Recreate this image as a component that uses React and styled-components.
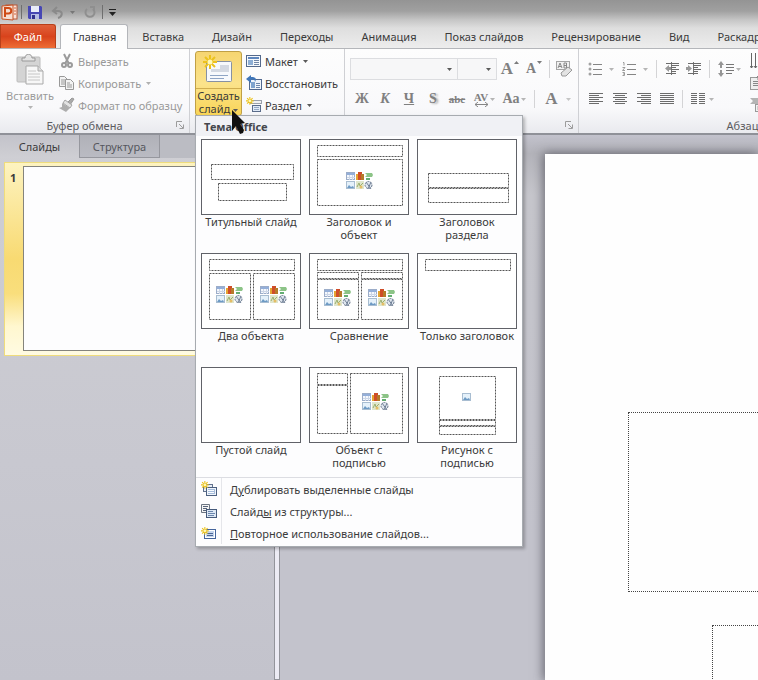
import React from "react";
import styled, { createGlobalStyle, css } from "styled-components";

const GlobalStyle = createGlobalStyle`
  * {
    box-sizing: border-box;
  }

  body {
    margin: 0;
    font-family: "Noto Sans", "Open Sans", sans-serif;
    font-size: 11px;
    line-height: 13px;
    color: #3b3b3b;
  }

  button, select {
    font: inherit;
    color: inherit;
    margin: 0;
    padding: 0;
    border: 0;
    background: none;
  }

  svg {
    display: block;
    flex: none;
  }
`;

const tabs = [
  "Вставка",
  "Дизайн",
  "Переходы",
  "Анимация",
  "Показ слайдов",
  "Рецензирование",
  "Вид",
  "Раскадровка",
];

// Placeholder frames are [x, y, width, height], icon groups are [x, y]
const layouts = [
  {
    name: "Титульный слайд",
    frames: [[10, 25, 82, 15], [17, 44, 68, 17]],
  },
  {
    name: "Заголовок и объект",
    frames: [[8, 6, 85, 11], [8, 20, 85, 46]],
    content: [[37, 33]],
  },
  {
    name: "Заголовок раздела",
    frames: [[11, 34, 80, 14], [11, 49, 80, 14]],
  },
  {
    name: "Два объекта",
    frames: [[8, 6, 85, 11], [8, 20, 41, 46], [52, 20, 41, 46]],
    content: [[15, 33], [59, 33]],
  },
  {
    name: "Сравнение",
    frames: [
      [8, 6, 85, 11],
      [8, 19, 41, 6],
      [52, 19, 41, 6],
      [8, 26, 41, 40],
      [52, 26, 41, 40],
    ],
    content: [[15, 36], [59, 36]],
  },
  {
    name: "Только заголовок",
    frames: [[8, 6, 85, 11]],
  },
  { name: "Пустой слайд", frames: [] },
  {
    name: "Объект с подписью",
    frames: [[8, 6, 30, 11], [8, 18, 30, 48], [41, 6, 52, 60]],
    content: [[53, 26]],
  },
  {
    name: "Рисунок с подписью",
    frames: [[22, 9, 56, 43], [22, 53, 56, 5], [22, 59, 56, 8]],
    picture: [45, 26],
  },
];

/* Icons */

const Arrow = ({ color = "#5a5a5a" }) => (
  <svg width="5" height="3" viewBox="0 0 5 3" aria-hidden="true">
    <path d="M0 0h5L2.5 3z" fill={color} />
  </svg>
);

const RaisedArrow = ({ up }) => (
  <svg width="5" height="3" viewBox="0 0 5 3" aria-hidden="true">
    <path d={up ? "M0 3h5L2.5 0z" : "M0 0h5L2.5 3z"} fill="#7c7c7c" />
  </svg>
);

const Star = () => (
  <g stroke="#ecc21c" strokeWidth="2">
    <path d="M7 0v14M0 7h14M2 2l10 10M12 2L2 12" />
    <circle cx="7" cy="7" r="2.500" fill="#fff8b8" stroke="none" />
  </g>
);

const LogoIcon = () => (
  <svg width="17" height="17" viewBox="0 0 17 17">
    <rect x="5" y="1" width="11" height="14" fill="#f9e2d8" stroke="#b75736" />
    <path d="M1 2l11-1v15L1 15z" fill="#f6ded2" stroke="#c75427" />
    <path d="M4 13V4h3.500a2.500 2.500 0 0 1 0 5.500H4" fill="none" stroke="#cf4b16" strokeWidth="2" />
    <path d="M13 4h2M13 7h2M13 10h2" stroke="#d86b40" />
  </svg>
);

const SaveIcon = () => (
  <svg width="14" height="14" viewBox="0 0 14 14">
    <path d="M0 1h13l1 1v12H1l-1-1z" fill="#4747b4" />
    <path d="M3 1h8v6H3z" fill="#e9edfa" />
    <path d="M3 9h8v5H3z" fill="#b6bde4" />
    <path d="M4 10h3v4H4z" fill="#30308c" />
  </svg>
);

const UndoIcon = () => (
  <svg width="13" height="14" viewBox="0 0 13 14" fill="none" stroke="#8a8a8a" strokeWidth="2">
    <path d="M2 6h5c6 0 4 6 0 7M6 2L2 6l4 3" />
  </svg>
);

const RedoIcon = () => (
  <svg width="12" height="13" viewBox="0 0 12 13" fill="none" stroke="#8f8f8f" strokeWidth="2">
    <path d="M3 3a4.500 4.500 0 1 0 6 0M6 1h4v4" />
  </svg>
);

const CustomizeIcon = () => (
  <svg width="7" height="7" viewBox="0 0 7 7">
    <path d="M0 0h7v1H0zM0 3h7L3.500 7z" fill="#222" />
  </svg>
);

const PasteIcon = () => (
  <svg width="28" height="31" viewBox="0 0 28 31">
    <rect x="1" y="3" width="23" height="25" rx="1" fill="#d4d4d4" stroke="#bcbcbc" />
    <path d="M6 7V4h3c0-5 7-5 7 0h3v3z" fill="#e4e4e4" stroke="#999" />
    <path d="M10 12h12l5 5v13H10z" fill="#f7f7f7" stroke="#a9a9a9" />
    <path d="M22 12v5h5" fill="#ddd" stroke="#a9a9a9" />
    <path d="M12 17h8M12 20h12M12 23h12M12 26h12" stroke="#c6c6c6" />
  </svg>
);

const CutIcon = () => (
  <svg width="16" height="16" viewBox="0 0 16 16" fill="none" stroke="#9b9b9b" strokeWidth="2">
    <path d="M5 1l5 10M11 1L6 11" />
    <circle cx="5" cy="12" r="2" />
    <circle cx="11" cy="12" r="2" />
  </svg>
);

const CopyIcon = () => (
  <svg width="16" height="16" viewBox="0 0 16 16" fill="#f3f3f3" stroke="#999">
    <path d="M.5 1.500h5l3 3v7h-8z" />
    <path d="M2 5h4M2 7h5M2 9h5" />
    <path d="M6.500 4.500h5l3 3v7h-8z" />
    <path d="M8 8h3M8 10h5M8 12h5" />
  </svg>
);

const BrushIcon = () => (
  <svg width="16" height="16" viewBox="0 0 16 16">
    <path d="M13 1l2 1-4 6-3-2z" fill="#aaa" stroke="#999" />
    <path d="M6 3l7 5-2 3-7-5z" fill="#e3e3e3" stroke="#a5a5a5" />
    <path d="M3 6l8 5-4 4-7-4 3-1z" fill="#adadad" />
  </svg>
);

const NewSlideIcon = () => (
  <svg width="32" height="30" viewBox="0 0 32 30">
    <rect x="3.500" y="6.500" width="25" height="20" rx="1" fill="#f7f9fc" stroke="#8791a3" />
    <path d="M17 10h9v7H8v-3h9z" fill="#d4d9e2" />
    <path d="M7 20.500h18M7 23.500h14" stroke="#8fa5c5" />
    <Star />
  </svg>
);

const LayoutIcon = () => (
  <svg width="16" height="16" viewBox="0 0 16 16">
    <rect x=".5" y="2.500" width="14" height="11" fill="#f5f8fc" stroke="#54698c" />
    <path d="M2 4h11v2H2z" fill="#5e86bd" />
    <path d="M2 7h5v5H2z" fill="#8daed5" />
    <path d="M8 7.500h5M8 9.500h5M8 11.500h5" stroke="#7086a7" />
  </svg>
);

const ResetIcon = () => (
  <svg width="16" height="16" viewBox="0 0 16 16">
    <rect x="3.500" y="4.500" width="12" height="10" fill="#f0f5fb" stroke="#51688f" />
    <path d="M5 7h4v6H5z" fill="#7fa4cf" />
    <path d="M10 8.500h4M10 10.500h4M10 12.500h4" stroke="#6e87ad" />
    <path d="M5 0L0 4l5 4V5c3-1 4 0 4 2 2-4 0-5-4-5z" fill="#3f76b9" />
  </svg>
);

const SectionIcon = () => (
  <svg width="16" height="16" viewBox="0 0 16 16">
    <rect x="4.500" y="3.500" width="11" height="3" fill="#f2f2f2" stroke="#9aa0aa" />
    <rect x="6.500" y="8.500" width="8" height="6" fill="#dfe9f6" stroke="#5a6c8a" />
    <path d="M8 10.500h5M8 12.500h5" stroke="#94a8c5" />
    <g transform="scale(.55)">
      <Star />
    </g>
  </svg>
);

const DuplicateIcon = () => (
  <svg width="16" height="16" viewBox="0 0 16 16">
    <rect x="2.500" y="3.500" width="9" height="7" fill="#e8eef6" stroke="#62738f" />
    <rect x="5.500" y="6.500" width="10" height="8" fill="#eff4fb" stroke="#4c607f" />
    <path d="M7 8h7v5H7z" fill="#a5bcdb" />
    <path d="M7 9.500h6M7 11.500h6" stroke="#f8fbff" />
    <g transform="scale(.55)">
      <Star />
    </g>
  </svg>
);

const OutlineIcon = () => (
  <svg width="16" height="16" viewBox="0 0 16 16">
    <path d="M.5 1.500h8v8h-8z" fill="#f4f4f4" stroke="#6c7582" />
    <path d="M2 3.500h5M2 5.500h4M2 7.500h3" stroke="#59657a" />
    <rect x="5.500" y="6.500" width="10" height="8" fill="#dce7f4" stroke="#465a7b" />
    <path d="M7 8.500h5M7 10.500h7M7 12.500h6" stroke="#6b87ae" />
  </svg>
);

const ReuseIcon = () => (
  <svg width="16" height="16" viewBox="0 0 16 16">
    <rect x="3.500" y="4.500" width="11" height="9" fill="#fff" stroke="#45659c" />
    <path d="M5 6h8v6H5z" fill="#c4d5ed" />
    <path d="M6 8.500h6M6 10.500h6" stroke="#4c6797" />
    <g transform="translate(0 2) scale(.55)">
      <Star />
    </g>
  </svg>
);

const LauncherIcon = () => (
  <svg width="8" height="8" viewBox="0 0 8 8" fill="none" stroke="#9c9c9c">
    <path d="M.5 6V.5H6M3 3l4 4M7.500 3.500v4h-4" />
  </svg>
);

const SpacingIcon = () => (
  <svg width="15" height="5" viewBox="0 0 15 5" fill="none" stroke="#858585">
    <path d="M1 2.500h13M4 0L1 2.500 4 5M11 0l3 2.500L11 5" />
  </svg>
);

const EraserIcon = () => (
  <svg width="17" height="18" viewBox="0 0 17 18">
    <rect x=".5" y="1.500" width="13" height="8" fill="#f1f1f1" stroke="#a5a5a5" />
    <path d="M2 8l2-5 2 5M3 6.500h2M8 3v5h2.500V3H8M8 5.500h3" fill="none" stroke="#888" />
    <path d="M12 7l4 3-6 6H6l-1-3z" fill="#e3e3e3" stroke="#999" />
  </svg>
);

const BulletsIcon = () => (
  <svg width="16" height="14" viewBox="0 0 16 14">
    <g fill="#a2a2a2">
      <circle cx="2" cy="2" r="1.500" />
      <circle cx="2" cy="7" r="1.500" />
      <circle cx="2" cy="12" r="1.500" />
    </g>
    <path d="M5 2.500h9M5 7.500h9M5 12.500h9" stroke="#858585" />
  </svg>
);

const NumbersIcon = () => (
  <svg width="16" height="14" viewBox="0 0 16 14" fill="none" stroke="#9a9a9a">
    <path d="M1 .5h1v3M.5 5.500H3L.5 8.500H3M.5 10.500h2v3h-2M1 12h1" />
    <path d="M5 2.500h9M5 7.500h9M5 12.500h9" stroke="#858585" />
  </svg>
);

const IndentIcon = ({ back }) => (
  <svg width="16" height="14" viewBox="0 0 16 14">
    <path d="M2 1.500h13M7 3.500h8M7 5.500h5M7 7.500h8M7 9.500h5M2 11.500h10" stroke="#6c6c6c" />
    <path d="M7.500 0v14" stroke="#777" strokeDasharray="1 1" />
    <path d={back ? "M5 3L1 6.500 5 10V8h2V5H5z" : "M2 3l4 3.500L2 10V8H0V5h2z"} fill="#999" />
  </svg>
);

const LineSpacingIcon = () => (
  <svg width="16" height="16" viewBox="0 0 16 16">
    <path d="M3 0l3 4H4v3H2V4H0zM2 9h2v3h2l-3 4-3-4h2z" fill="#969696" />
    <path d="M8 3.500h8M8 6.500h8M8 9.500h8M8 12.500h6" stroke="#777" />
  </svg>
);

const AlignIcon = ({ d }) => (
  <svg width="14" height="12" viewBox="0 0 14 12" fill="none" stroke="#6c6c6c">
    <path d={d} />
  </svg>
);

const TextDirectionIcon = () => (
  <svg width="16" height="16" viewBox="0 0 16 16" fill="none" stroke="#666">
    <path d="M1.500 0v15M5.500 0v15M9.500 0v8M0 13l1.500 2L3 13M4 13l1.500 2L7 13" />
  </svg>
);

const TextAlignIcon = () => (
  <svg width="16" height="16" viewBox="0 0 16 16">
    <rect x=".5" y="2.500" width="12" height="12" fill="#eee" stroke="#999" />
    <path d="M3 6.500h7M3 8.500h7M3 10.500h7M8 1v4M6 3l2-2 2 2" stroke="#888" fill="none" />
  </svg>
);

const SmartArtIcon = () => (
  <svg width="16" height="16" viewBox="0 0 16 16">
    <path d="M0 1h14v6H0l3-3z" fill="#b4b4b4" />
    <rect x="5.500" y="7.500" width="9" height="7" fill="#f1f1f1" stroke="#999" />
    <path d="M7 10h6M7 12h6" stroke="#aaa" />
  </svg>
);

const Cursor = () => (
  <svg width="15" height="25" viewBox="0 0 15 25">
    <path d="M0 0l13 13-5 1 4 6-1 3-3 1-4-8-4 5z" fill="#101010" />
  </svg>
);

const Picture = ({ x, y }) => (
  <g transform={`translate(${x} ${y})`}>
    <rect x=".5" y=".5" width="8" height="7" fill="#e5f1fa" stroke="#a8bdd1" />
    <path d="M1 7l2-3 2 2 2-1 1 2z" fill="#6d9ac4" />
  </g>
);

const ContentIcons = ({ x, y }) => (
  <g transform={`translate(${x} ${y})`}>
    <rect x=".5" y=".5" width="8" height="7" fill="#f5f8fd" stroke="#9cadc9" />
    <path d="M1 1h8v2H1z" fill="#94afd9" />
    <path d="M1 5.500h8M3.500 3v5M6.500 3v5" stroke="#ccd6e6" />
    <path d="M10 2h3v6h-3z" fill="#e5a432" />
    <path d="M12 0h4v8h-4z" fill="#cf4d29" />
    <path d="M15 2h3v6h-3z" fill="#b57a29" />
    <path d="M19 1h7l1 2-1 2h-7l2-2z" fill="#8cc487" />
    <path d="M20 6h4v2h-4z" fill="#63ad72" />
    <Picture x={0} y={9} />
    <rect x="10" y="9" width="8" height="8" fill="#dfe6cc" />
    <path d="M11 15l2-4 1 3 3-3" stroke="#9baf6e" fill="none" />
    <circle cx="15" cy="15" r="1.500" fill="#e5bd65" />
    <circle cx="22.500" cy="13" r="3.500" fill="#dfe6ee" stroke="#69788c" strokeDasharray="2 1" />
    <path d="M20 10l5 7M25 10l-3 7" stroke="#718197" />
  </g>
);

const LayoutPreview = ({ layout }) => (
  <svg width="98" height="74" viewBox="1 1 98 74" aria-hidden="true">
    {layout.frames.map(([x, y, w, h]) => (
      <rect
        key={`${x}-${y}`}
        x={x + 0.5}
        y={y + 0.5}
        width={w}
        height={h}
        fill="none"
        stroke="#555"
        strokeDasharray="2 1"
      />
    ))}
    {layout.content?.map(([x, y]) => <ContentIcons key={x} x={x} y={y} />)}
    {layout.picture && <Picture x={layout.picture[0]} y={layout.picture[1]} />}
  </svg>
);

const lines = {
  left: "M0 .5h14M0 2.500h10M0 4.500h14M0 6.500h10M0 8.500h14M0 10.500h10",
  center: "M0 .5h14M2 2.500h10M0 4.500h14M2 6.500h10M0 8.500h14M2 10.500h10",
  right: "M0 .5h14M4 2.500h10M0 4.500h14M4 6.500h10M0 8.500h14M4 10.500h10",
  justify: "M0 .5h14M0 2.500h14M0 4.500h14M0 6.500h14M0 8.500h14M0 10.500h14",
  columns: "M0 .5h6M8 .5h6M0 2.500h6M8 2.500h6M0 4.500h6M8 4.500h6M0 6.500h6M8 6.500h6M0 8.500h6M8 8.500h6M0 10.500h6M8 10.500h6",
};

export default function App() {
  return (
    <Window>
      <GlobalStyle />
      <Header>
        <QuickAccess>
          <LogoIcon />
          <QuickDivider />
          <QuickButton aria-label="Сохранить"><SaveIcon /></QuickButton>
          <QuickButton aria-label="Отменить">
            <UndoIcon />
            <Arrow color="#777" />
          </QuickButton>
          <QuickButton aria-label="Повторить"><RedoIcon /></QuickButton>
          <QuickDivider />
          <QuickButton aria-label="Настройка панели"><CustomizeIcon /></QuickButton>
        </QuickAccess>
        <Tabs>
          <FileTab>Файл</FileTab>
          <Tab $active>Главная</Tab>
          {tabs.map((tab) => (
            <Tab key={tab}>{tab}</Tab>
          ))}
        </Tabs>
      </Header>

      <Ribbon>
        <Group $width={190}>
          <GroupBody>
            <PasteButton disabled>
              <PasteIcon />
              Вставить
              <Arrow color="#b5b5b5" />
            </PasteButton>
            <Commands>
              <Command disabled><CutIcon />Вырезать</Command>
              <Command disabled><CopyIcon />Копировать<Arrow color="#b0b0b0" /></Command>
              <Command disabled><BrushIcon />Формат по образцу</Command>
            </Commands>
          </GroupBody>
          <GroupFooter>
            <GroupTitle>Буфер обмена</GroupTitle>
            <Launcher aria-label="Буфер обмена: параметры"><LauncherIcon /></Launcher>
          </GroupFooter>
        </Group>

        <Group $width={155}>
          <GroupBody>
            <NewSlide>
              <NewSlideTop aria-label="Создать слайд"><NewSlideIcon /></NewSlideTop>
              <NewSlideBottom aria-expanded="true">
                Создать слайд<Arrow />
              </NewSlideBottom>
              <CursorLayer><Cursor /></CursorLayer>
              <Menu>
                <MenuTitle>Тема Office</MenuTitle>
                <Gallery>
                  {layouts.map((layout) => (
                    <LayoutButton key={layout.name}>
                      <Thumb><LayoutPreview layout={layout} /></Thumb>
                      <LayoutName>{layout.name}</LayoutName>
                    </LayoutButton>
                  ))}
                </Gallery>
                <MenuList>
                  <MenuItem>
                    <MenuIcon><DuplicateIcon /></MenuIcon>
                    <span>Д<u>у</u>блировать выделенные слайды</span>
                  </MenuItem>
                  <MenuItem>
                    <MenuIcon><OutlineIcon /></MenuIcon>
                    <span>Слайд<u>ы</u> из структуры...</span>
                  </MenuItem>
                  <MenuItem>
                    <MenuIcon><ReuseIcon /></MenuIcon>
                    <span><u>П</u>овторное использование слайдов...</span>
                  </MenuItem>
                </MenuList>
              </Menu>
            </NewSlide>
            <Commands>
              <Command><LayoutIcon />Макет<Arrow /></Command>
              <Command><ResetIcon />Восстановить</Command>
              <Command><SectionIcon />Раздел<Arrow /></Command>
            </Commands>
          </GroupBody>
        </Group>

        <Group $width={234}>
          <ToolRow>
            <Combo $width={108}>
              <select aria-label="Шрифт" />
              <Arrow />
            </Combo>
            <Combo $width={40}>
              <select aria-label="Размер шрифта" />
              <Arrow />
            </Combo>
            <Tool $width={26} $size={17} $bold aria-label="Увеличить размер">
              A<Raised><RaisedArrow up /></Raised>
            </Tool>
            <Tool $width={22} $size={14} $bold aria-label="Уменьшить размер">
              A<Raised><RaisedArrow /></Raised>
            </Tool>
            <Divider />
            <Tool $width={20} aria-label="Очистить формат"><EraserIcon /></Tool>
          </ToolRow>
          <ToolRow>
            <Tool $width={24} $bold>Ж</Tool>
            <Tool $width={22} $bold $italic>К</Tool>
            <Tool $width={26} $bold><u>Ч</u></Tool>
            <Tool $width={22} $bold $shadow>S</Tool>
            <Tool $width={26} $size={11} $bold><s>abc</s></Tool>
            <Tool $width={28} $size={11} $bold aria-label="Межзнаковый интервал">
              <Stack>AV<SpacingIcon /></Stack>
              <Arrow color="#b5b5b5" />
            </Tool>
            <Tool $width={32} $size={14} $bold>Aa<Arrow color="#b5b5b5" /></Tool>
            <Divider />
            <Tool $width={38} $size={17} $bold $gap={8}>A<Arrow color="#c5c5c5" /></Tool>
          </ToolRow>
          <GroupFooter>
            <GroupTitle />
            <Launcher aria-label="Шрифт: параметры"><LauncherIcon /></Launcher>
          </GroupFooter>
        </Group>

        <Group $width={348}>
          <Paragraph>
            <div>
              <ToolRow>
                <Tool $width={34} $gap={5} aria-label="Маркеры"><BulletsIcon /><Arrow color="#b5b5b5" /></Tool>
                <Tool $width={34} $gap={5} aria-label="Нумерация"><NumbersIcon /><Arrow color="#b5b5b5" /></Tool>
                <Divider />
                <Tool $width={22} aria-label="Уменьшить отступ"><IndentIcon back /></Tool>
                <Tool $width={22} aria-label="Увеличить отступ"><IndentIcon /></Tool>
                <Divider />
                <Tool $width={30} $gap={2} aria-label="Междустрочный интервал"><LineSpacingIcon /><Arrow color="#b5b5b5" /></Tool>
              </ToolRow>
              <ToolRow>
                <Tool $width={24} aria-label="По левому краю"><AlignIcon d={lines.left} /></Tool>
                <Tool $width={24} aria-label="По центру"><AlignIcon d={lines.center} /></Tool>
                <Tool $width={24} aria-label="По правому краю"><AlignIcon d={lines.right} /></Tool>
                <Tool $width={22} aria-label="По ширине"><AlignIcon d={lines.justify} /></Tool>
                <Divider />
                <Tool $width={30} $gap={4} aria-label="Колонки"><AlignIcon d={lines.columns} /><Arrow color="#b5b5b5" /></Tool>
              </ToolRow>
            </div>
            <Commands>
              <Command disabled aria-label="Направление текста"><TextDirectionIcon /></Command>
              <Command disabled aria-label="Выровнять текст"><TextAlignIcon /></Command>
              <Command disabled aria-label="Преобразовать в SmartArt"><SmartArtIcon /></Command>
            </Commands>
          </Paragraph>
          <GroupFooter>
            <GroupTitle>Абзац</GroupTitle>
          </GroupFooter>
        </Group>
      </Ribbon>

      <Workspace>
        <SidePane>
          <PaneTabs>
            <PaneTab $active>Слайды</PaneTab>
            <PaneTab>Структура</PaneTab>
          </PaneTabs>
          <SlideItem>
            <SlideNumber>1</SlideNumber>
            <SlideThumb />
          </SlideItem>
        </SidePane>
        <Splitter />
        <Canvas>
          <Slide>
            <TitlePlaceholder />
            <SubtitlePlaceholder />
          </Slide>
        </Canvas>
      </Workspace>
    </Window>
  );
}

/* Window and header */

const Window = styled.div`
  display: flex;
  flex-direction: column;
  height: 100vh;
  overflow: hidden;
  background: #c3c3cc;
`;

const Header = styled.header`
  border-bottom: 1px solid #b4b6ba;
  background: linear-gradient(#949494, #a0a0a0 11px, #c6c6c6 20px, #dedede 28px, #ededed);
`;

const QuickAccess = styled.div`
  display: flex;
  align-items: center;
  gap: 3px;
  height: 24px;
  padding-left: 1px;
`;

const QuickButton = styled.button`
  display: flex;
  align-items: center;
  gap: 6px;
  padding: 0 3px;
`;

const QuickDivider = styled.span`
  width: 1px;
  height: 14px;
  background: #6f6f6f;
`;

const Tabs = styled.nav`
  display: flex;
  height: 24px;
`;

const Tab = styled.button`
  flex: none;
  padding: 1px 14px 0;
  line-height: 22px;
  ${({ $active }) =>
    $active &&
    css`
      margin-bottom: -1px;
      border: 1px solid #b4b6ba;
      border-bottom: 0;
      border-radius: 3px 3px 0 0;
      padding: 0 11px 0 12px;
      background: #fdfdfd;
    `}
`;

const FileTab = styled.button`
  flex: none;
  width: 56px;
  margin-right: 4px;
  border: 1px solid #b8401a;
  border-bottom: 0;
  border-radius: 0 3px 0 0;
  color: #fff;
  line-height: 22px;
  background: linear-gradient(#e0603a, #d8431c 50%, #ee6d35);
`;

/* Ribbon */

const Ribbon = styled.div`
  display: flex;
  flex: none;
  height: 86px;
  border-bottom: 2px solid #8f9198;
  background: linear-gradient(#fdfdfd, #f9f9fb 70%, #e9eaee);
`;

const Group = styled.section`
  display: flex;
  flex: none;
  flex-direction: column;
  width: ${({ $width }) => $width}px;
  padding: 2px 5px 0;
  border-right: 1px solid #cfd0d4;
`;

const GroupBody = styled.div`
  display: flex;
  gap: 4px;
`;

const GroupFooter = styled.footer`
  display: flex;
  align-items: center;
  height: 16px;
  margin-top: auto;
`;

const GroupTitle = styled.span`
  flex: 1;
  padding-right: 20px;
  text-align: center;
  color: #5c5c60;
`;

const Launcher = styled.button`
  margin-left: -8px;
`;

const PasteButton = styled.button`
  display: flex;
  flex-direction: column;
  align-items: center;
  gap: 4px;
  width: 50px;
  padding-top: 3px;
  color: #9a9a9a;
`;

const Commands = styled.div`
  display: flex;
  flex-direction: column;
`;

const Command = styled.button`
  display: flex;
  align-items: center;
  gap: 3px;
  height: 22px;
  padding-bottom: 2px;
  white-space: nowrap;
  color: ${({ disabled }) => (disabled ? "#999" : "#3b3b3b")};

  svg:last-child:not(:first-child) {
    margin-left: 2px;
  }
`;

const NewSlide = styled.div`
  position: relative;
  display: flex;
  flex-direction: column;
  width: 47px;
  height: 65px;
  border: 1px solid #c0a046;
  border-radius: 3px;
  background: linear-gradient(#f6d571, #fbe38b 50%, #f9d557);
`;

const NewSlideTop = styled.button`
  display: flex;
  justify-content: center;
  align-items: center;
  height: 37px;
  border-bottom: 1px solid #d0ae50;
`;

const NewSlideBottom = styled.button`
  flex: 1;
  line-height: 13px;

  svg {
    display: inline-block;
    margin-left: 3px;
    vertical-align: middle;
  }
`;

const CursorLayer = styled.span`
  position: absolute;
  z-index: 2;
  top: 58px;
  left: 36px;
`;

const ToolRow = styled.div`
  display: flex;
  align-items: center;
  height: 30px;
  padding-top: 6px;
`;

const Tool = styled.button`
  display: flex;
  flex: none;
  align-items: center;
  justify-content: center;
  gap: ${({ $gap = 1 }) => $gap}px;
  width: ${({ $width }) => $width}px;
  color: #808080;
  font-family: "Liberation Serif", serif;
  font-size: ${({ $size = 14 }) => $size}px;
  font-weight: ${({ $bold }) => ($bold ? 700 : 400)};
  font-style: ${({ $italic }) => ($italic ? "italic" : "normal")};
  text-shadow: ${({ $shadow }) => ($shadow ? "2px 1px 2px #aaa" : "none")};
  line-height: 16px;
`;

const Raised = styled.span`
  align-self: flex-start;
`;

const Stack = styled.span`
  display: flex;
  flex-direction: column;
  align-items: center;
  line-height: 10px;
`;

const Divider = styled.span`
  flex: none;
  width: 1px;
  height: 18px;
  margin: 0 4px;
  background: #d4d4d6;
`;

const Combo = styled.label`
  display: flex;
  flex: none;
  align-items: center;
  width: ${({ $width }) => $width}px;
  height: 22px;
  padding-right: 5px;
  border: 1px solid #dcdde0;
  background: #f7f7f8;

  & + & {
    margin-left: -1px;
  }

  select {
    flex: 1;
    min-width: 0;
    height: 20px;
    appearance: none;
  }
`;

const Paragraph = styled.div`
  display: flex;
  gap: 6px;
`;

/* Menu of slide layouts */

const Menu = styled.div`
  position: absolute;
  z-index: 1;
  top: 63px;
  left: -1px;
  width: 328px;
  border: 1px solid #a7abb0;
  background: #fdfdfe;
  box-shadow: 2px 2px 3px rgba(0, 0, 0, 0.25);
`;

const MenuTitle = styled.h3`
  margin: 0;
  padding: 3px 8px 1px;
  font-size: 11px;
  line-height: 16px;
  color: #44464c;
  background: #f0f1f5;
`;

const Gallery = styled.div`
  display: grid;
  grid-template-columns: repeat(3, 1fr);
  grid-auto-rows: 106px;
  gap: 8px;
  padding: 3px 5px 4px;
`;

const LayoutButton = styled.button`
  display: flex;
  flex-direction: column;
  align-items: center;
`;

const Thumb = styled.span`
  border: 1px solid #606268;
  background: #fff;
`;

const LayoutName = styled.span`
  max-width: 100px;
`;

const MenuList = styled.div`
  display: flex;
  flex-direction: column;
  border-top: 1px solid #dcdde2;
  padding-bottom: 2px;
`;

const MenuItem = styled.button`
  display: flex;
  align-items: center;
  gap: 8px;
  height: 22px;
  text-align: left;
`;

const MenuIcon = styled.span`
  display: flex;
  align-items: center;
  width: 26px;
  height: 22px;
  padding-left: 5px;
  border-right: 1px solid #e5e6ea;
`;

/* Workspace */

const Workspace = styled.main`
  display: flex;
  flex: 1;
  min-height: 0;
`;

const SidePane = styled.aside`
  flex: none;
  width: 274px;
  background: linear-gradient(#cfcfd4, #c8c8d0 60%, #c3c3cc);
`;

const PaneTabs = styled.div`
  display: flex;
  height: 23px;
  background: #bbbcc3;
`;

const PaneTab = styled.button`
  width: 80px;
  border: 1px solid #96979e;
  border-top: 0;
  border-left: 0;
  color: #55575d;
  background: linear-gradient(#b0b1b8, #babbc3);
  ${({ $active }) =>
    $active &&
    css`
      border-bottom: 0;
      color: #3b3b3b;
      background: linear-gradient(#c3c3ca, #cfcfd4);
    `}
`;

const SlideItem = styled.div`
  display: flex;
  margin: 4px 2px 0 4px;
  padding: 3px 0 4px;
  border: 1px solid #efdc7c;
  background: linear-gradient(#fdf3c0, #f8da72 50%, #f9de7c 68%, #fff7cf 85%, #fffbe2);
`;

const SlideNumber = styled.span`
  width: 18px;
  padding: 5px;
  font-weight: 700;
`;

const SlideThumb = styled.div`
  width: 246px;
  aspect-ratio: 4 / 3;
  border: 1px solid #85847c;
  background: #fdfdfe;
`;

const Splitter = styled.div`
  flex: none;
  width: 6px;
  border: 1px solid #93949b;
  background: #ecebf4;
`;

const Canvas = styled.div`
  display: flex;
  flex: 1;
  min-width: 0;
  padding: 19px 0 0 265px;
  background: linear-gradient(#c2c2cc, #b3b3ba 18px, #c6c6cc 60px, #c3c3cc 400px);
`;

const Slide = styled.div`
  flex: 1;
  padding: 258px 0 0 83px;
  background: #fefefe;
  box-shadow: -1px 0 10px 1px rgba(50, 50, 60, 0.6);
`;

const TitlePlaceholder = styled.div`
  height: 180px;
  border: 1px dotted #444;
  border-right: 0;
`;

const SubtitlePlaceholder = styled.div`
  height: 180px;
  margin: 33px 0 0 84px;
  border: 1px dotted #444;
  border-right: 0;
`;
